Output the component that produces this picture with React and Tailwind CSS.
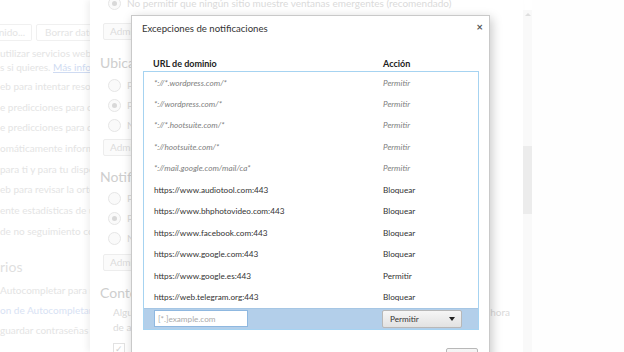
import React from 'react';

const leftLines = [
  'eb para intentar resolver errores de ortografía',
  'e predicciones para completar búsquedas y URL',
  'e predicciones para que las páginas carguen antes',
  'omáticamente información sobre posibles incidentes',
  'para ti y para tu dispositivo frente a sitios peligrosos',
  'eb para revisar la ortografía',
  'ente estadísticas de uso e informes de errores',
  'de no seguimiento con tu tráfico de navegación',
];

const rows = [
  { url: '*://*.wordpress.com/*', action: 'Permitir', pattern: true },
  { url: '*://wordpress.com/*', action: 'Permitir', pattern: true },
  { url: '*://*.hootsuite.com/*', action: 'Permitir', pattern: true },
  { url: '*://hootsuite.com/*', action: 'Permitir', pattern: true },
  { url: '*://mail.google.com/mail/ca*', action: 'Permitir', pattern: true },
  { url: 'https://www.audiotool.com:443', action: 'Bloquear' },
  { url: 'https://www.bhphotovideo.com:443', action: 'Bloquear' },
  { url: 'https://www.facebook.com:443', action: 'Bloquear' },
  { url: 'https://www.google.com:443', action: 'Bloquear' },
  { url: 'https://www.google.es:443', action: 'Permitir' },
  { url: 'https://web.telegram.org:443', action: 'Bloquear' },
];

const Radio = ({ checked }) => (
  <span className="w-[13px] h-[13px] rounded-full border border-[#e6e6e6] bg-[#fafafa] flex items-center justify-center shrink-0">
    {checked && <span className="w-[5px] h-[5px] rounded-full bg-[#d8d8d8]" />}
  </span>
);

const RadioRow = ({ checked, text }) => (
  <div className="flex items-center gap-[6px] h-[20px] pl-[18px]">
    <Radio checked={checked} />
    <span className="whitespace-nowrap">{text}</span>
  </div>
);

const AdmButton = ({ className }) => (
  <div className={`ml-[13px] w-[60px] h-[17px] border border-[#ededed] rounded-[2px] bg-[#fbfbfb] pl-[6px] flex items-center text-[#dcdcdc] overflow-hidden whitespace-nowrap ${className}`}>
    Administrar excepciones...
  </div>
);

const App = () => {
  return (
    <div className="relative w-[624px] h-[352px] overflow-hidden bg-white font-['Lato',sans-serif] text-[10px]">
      {/* base settings page */}
      <div className="flex flex-col text-[#e4e4e4] whitespace-nowrap">
        <div className="flex gap-[4px] mt-[24px]">
          <div className="w-[32px] h-[17px] border border-[#f0f0f0] border-l-0 rounded-r-[2px] flex items-center justify-end pr-[6px] overflow-hidden">
            <span>Configuración de contenido...</span>
          </div>
          <div className="h-[17px] px-[8px] border border-[#f0f0f0] rounded-[2px] flex items-center">Borrar datos de navegación...</div>
        </div>
        <div className="h-[14px] leading-[14px] mt-[5px]">utilizar servicios web para ayudar a resolver errores de navegación</div>
        <div className="h-[14px] leading-[14px]">
          s si quieres. <span className="text-[#cfdbf2] underline">Más información</span>
        </div>
        <div className="flex flex-col mt-[2px]">
          {leftLines.map((l) => (
            <div key={l} className="h-[20.7px] leading-[20.7px]">{l}</div>
          ))}
        </div>
        <div className="mt-[14px] h-[22px] leading-[22px] text-[14px] text-[#dfdfdf]">rios</div>
        <div className="h-[20px] leading-[20px] mt-[2px]">Autocompletar para rellenar formularios con un solo clic</div>
        <div className="h-[20px] leading-[20px] text-[#d8e2f4]">on de Autocompletar</div>
        <div className="h-[20px] leading-[20px]">guardar contraseñas con Smart Lock para contraseñas</div>
      </div>

      {/* content settings overlay page */}
      <div className="absolute left-[90px] top-0 bottom-0 w-[433px] bg-white shadow-[-3px_0_6px_rgba(0,0,0,0.06)] text-[#dadada] whitespace-nowrap overflow-hidden">
        <div className="-mt-[7px]">
          <RadioRow checked text="No permitir que ningún sitio muestre ventanas emergentes (recomendado)" />
        </div>
        <AdmButton className="mt-[10px]" />
        <div className="text-[14px] text-[#cecece] pl-[10px] mt-[13px] h-[20px] leading-[20px]">Ubicación</div>
        <div className="mt-[2px]">
          <RadioRow text="Permitir que todos los sitios puedan rastrear tu ubicación" />
          <RadioRow checked text="Preguntar cuando un sitio intente rastrear tu ubicación" />
          <RadioRow text="No permitir que ningún sitio rastree tu ubicación" />
        </div>
        <AdmButton className="mt-[4px]" />
        <div className="text-[14px] text-[#cecece] pl-[10px] mt-[11px] h-[20px] leading-[20px]">Notificaciones</div>
        <div className="mt-[1px]">
          <RadioRow text="Permitir que todos los sitios muestren notificaciones" />
          <RadioRow checked text="Preguntar cuando un sitio quiera mostrar notificaciones" />
          <RadioRow text="No permitir que ningún sitio muestre notificaciones" />
        </div>
        <AdmButton className="mt-[6px]" />
        <div className="text-[14px] text-[#cecece] pl-[10px] mt-[12px] h-[20px] leading-[20px]">Contenido protegido</div>
        <div className="pl-[23px] pr-[13px] mt-[2px] leading-[15px]">
          <div className="flex gap-[4px]">
            <span className="flex-1 overflow-hidden">Algunos servicios de contenido usan identificadores de equipo únicos para autorizar el acceso a la</span>
            <span>hora</span>
          </div>
          <div>de autorización del contenido protegido.</div>
        </div>
        <div className="pl-[23px] mt-[6px] flex items-center gap-[6px]">
          <span className="w-[12px] h-[12px] border border-[#e2e2e2] text-[9px] leading-[10px] text-center text-[#cfcfcf]">✓</span>
          <span>Permitir identificadores para contenido protegido</span>
        </div>
      </div>

      {/* scrollbar */}
      <div className="absolute left-[523px] top-[10px] bottom-0 w-[9px] bg-[#f9f9f9] flex flex-col items-center">
        <span className="mt-[3px] w-0 h-0 border-x-[3px] border-x-transparent border-b-[3px] border-b-[#dedede]" />
        <div className="mt-[130px] w-full h-[68px] bg-[#ececec]" />
      </div>
      <div className="absolute left-[532px] top-0 bottom-0 right-0 bg-[#fefefe]" />

      {/* dialog */}
      <div className="absolute left-[131px] top-[15px] w-[359px] h-[360px] bg-white border border-[#c9c9c9] shadow-[2px_3px_10px_rgba(0,0,0,0.22)] flex flex-col text-[#333]">
        <div className="flex items-start justify-between pl-[10px] pr-[6px] pt-[6px] h-[20px]">
          <div className="text-[9.6px] leading-[14px] text-[#333]">Excepciones de notificaciones</div>
          <span className="-mt-[1px] text-[11px] leading-[11px] font-bold text-[#555]">×</span>
        </div>
        <div className="flex mt-[21px] pl-[21px] h-[14px] items-center font-bold text-[9px] text-[#222]">
          <span className="w-[230px]">URL de dominio</span>
          <span>Acción</span>
        </div>
        <div className="ml-[11px] w-[336px] border border-[#a6d3f1] flex flex-col">
          {rows.map((r) => (
            <div key={r.url} className={`flex items-center h-[21.45px] pl-[10px] text-[8.2px] ${r.pattern ? 'italic text-[#808080]' : 'text-[#333]'}`}>
              <span className="w-[229px] whitespace-nowrap">{r.url}</span>
              <span>{r.action}</span>
            </div>
          ))}
          <div className="h-[21px] bg-[#b3cfea] border-t border-[#a6c6e4] flex items-center pl-[10px]">
            <div className="w-[94px] h-[17px] bg-white border border-[#8fb8e0] flex items-center pl-[3px] text-[8.2px] text-[#aaa]">[*.]example.com</div>
            <div className="ml-[134px] w-[80px] h-[18px] border border-[#b8b8b8] rounded-[2px] bg-gradient-to-b from-[#f6f6f6] to-[#e2e2e2] flex items-center justify-between pl-[7px] pr-[6px] text-[8.2px] text-[#333]">
              <span>Permitir</span>
              <span className="w-0 h-0 border-x-[3.5px] border-x-transparent border-t-[4px] border-t-[#222]" />
            </div>
          </div>
        </div>
        <div className="flex justify-end pr-[11px] mt-[18px]">
          <div className="w-[32px] h-[20px] border border-[#b8b8b8] rounded-[2px] bg-gradient-to-b from-[#f6f6f6] to-[#e6e6e6]" />
        </div>
      </div>
    </div>
  );
};

export default App;
